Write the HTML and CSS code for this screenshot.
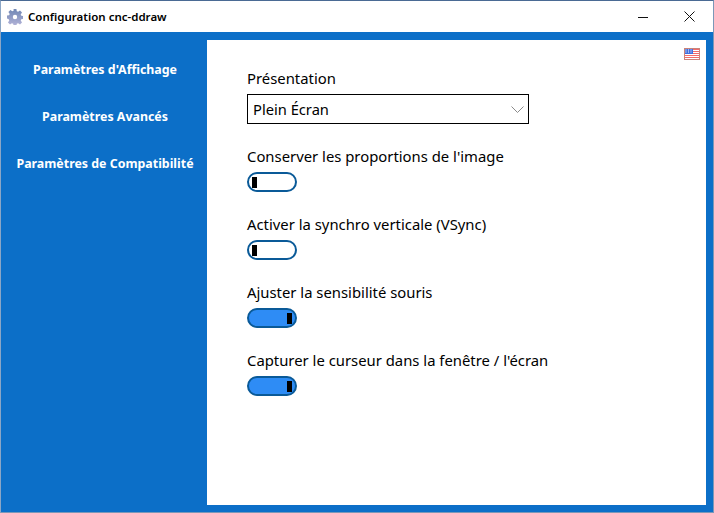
FILE: index.html
```html
<!DOCTYPE html>
<html lang="fr">
<head>
    <meta charset="UTF-8">
    <meta name="viewport" content="width=device-width, initial-scale=1.0">
    <title>Configuration cnc-ddraw</title>
    <link rel="stylesheet" href="styles.css">
</head>
<body>
    <div class="window">
        <div class="titlebar">
            <svg class="app-icon" width="16" height="16" viewBox="0 0 16 16">
                <defs>
                    <linearGradient id="gearFill" x1="0" y1="0" x2="0" y2="1">
                        <stop offset="0" stop-color="#6f86b4"/>
                        <stop offset="1" stop-color="#b4b4d8"/>
                    </linearGradient>
                </defs>
                <path fill="url(#gearFill)" fill-rule="evenodd" d="M6.600 0h2.800l.4 2.200 1.300.6 1.900-1.300 2 2-1.300 1.900.6 1.300 2.200.4v2.800l-2.200.4-.6 1.300 1.300 1.900-2 2-1.900-1.300-1.300.6-.4 2.200H6.600l-.4-2.200-1.300-.6-1.900 1.300-2-2 1.300-1.900-.6-1.300L0 9.400V6.600l2.100-.4.6-1.300L1.400 3l2-2 1.900 1.300 1.300-.6zM8 5.800a2.200 2.200 0 1 0 0 4.400 2.200 2.200 0 0 0 0-4.400z"/>
            </svg>
            <span class="window-title">Configuration cnc-ddraw</span>
            <div class="window-buttons">
                <svg width="10" height="10" viewBox="0 0 10 10"><path d="M0 5.500h10" stroke="#111" fill="none"/></svg>
                <svg width="11" height="11" viewBox="0 0 11 11"><path d="M.5.500l10 10M10.500.500l-10 10" stroke="#111" fill="none"/></svg>
            </div>
        </div>
        <div class="main">
            <nav class="sidebar">
                <a class="nav-item">Paramètres d'Affichage</a>
                <a class="nav-item">Paramètres Avancés</a>
                <a class="nav-item">Paramètres de Compatibilité</a>
            </nav>
            <div class="content">
                <svg class="flag" width="16" height="12" viewBox="0 0 16 12">
                    <rect width="16" height="12" fill="#fff"/>
                    <path d="M0 1.500h16M0 3.500h16M0 5.500h16M0 7.500h16M0 9.500h16" stroke="#f26a6a" fill="none"/>
                    <rect x="0" y="0" width="9" height="6" fill="#3f6fe0"/>
                    <path d="M1.500 2h1M4 2h1M6.500 2h1M1.500 4h1M4 4h1M6.500 4h1" stroke="#fff" fill="none"/>
                    <rect x=".5" y=".5" width="15" height="11" fill="none" stroke="#c9837a"/>
                </svg>
                <div class="setting">
                    <label class="setting-label">Présentation</label>
                    <div class="select">
                        <span>Plein Écran</span>
                        <svg width="13" height="7" viewBox="0 0 13 7"><path d="M.5.500l6 6 6-6" stroke="#8a8a8a" fill="none"/></svg>
                    </div>
                </div>
                <div class="setting">
                    <label class="setting-label">Conserver les proportions de l'image</label>
                    <div class="toggle"><span class="nub"></span></div>
                </div>
                <div class="setting">
                    <label class="setting-label">Activer la synchro verticale (VSync)</label>
                    <div class="toggle"><span class="nub"></span></div>
                </div>
                <div class="setting">
                    <label class="setting-label">Ajuster la sensibilité souris</label>
                    <div class="toggle on"><span class="nub"></span></div>
                </div>
                <div class="setting">
                    <label class="setting-label">Capturer le curseur dans la fenêtre / l'écran</label>
                    <div class="toggle on"><span class="nub"></span></div>
                </div>
            </div>
        </div>
    </div>
</body>
</html>
```

FILE: styles.css
```css
* {
    margin: 0;
    padding: 0;
    box-sizing: border-box;
}

body {
    font-family: "Noto Sans", Arial, sans-serif;
    background-color: #fff;
    width: 714px;
    height: 513px;
    overflow: hidden;
}

.window {
    width: 714px;
    height: 513px;
    display: flex;
    flex-direction: column;
    border: 1px solid #7b98b8;
    border-top-color: #4a6a94;
    border-left-color: #8ba6c6;
    background-color: #0c6fc8;
}

.titlebar {
    height: 31px;
    flex: none;
    display: flex;
    align-items: center;
    background-color: #fff;
    padding-left: 6px;
}

.app-icon {
    margin-right: 5px;
}

.window-title {
    font-size: 11.5px;
    font-weight: 600;
    color: #000;
}

.window-buttons {
    margin-left: auto;
    display: flex;
    align-items: center;
    gap: 36px;
    padding-right: 18px;
}

.window-buttons svg {
    display: block;
}

.main {
    flex: 1;
    display: flex;
    padding: 8px 7px 7px 0;
}

.sidebar {
    width: 206px;
    flex: none;
    display: flex;
    flex-direction: column;
    gap: 28px;
    padding: 20px 0 0 2px;
    text-align: center;
}

.nav-item {
    color: #fff;
    font-size: 12.4px;
    font-weight: 700;
    line-height: 19px;
}

.content {
    flex: 1;
    position: relative;
    background-color: #fff;
    padding: 29px 40px 0;
    display: flex;
    flex-direction: column;
    gap: 23px;
}

.flag {
    position: absolute;
    top: 8px;
    right: 6px;
}

.setting-label {
    display: block;
    font-size: 14.85px;
    line-height: 18px;
    color: #000;
    margin-bottom: 7px;
}

.select {
    width: 282px;
    height: 30px;
    border: 1px solid #000;
    display: flex;
    align-items: center;
    justify-content: space-between;
    padding: 0 4px 0 5px;
    font-size: 14.7px;
    color: #000;
}

.toggle {
    width: 50px;
    height: 20px;
    border: 2px solid #0a5a98;
    border-radius: 10px;
    background-color: #fff;
    display: flex;
    align-items: center;
    padding: 0 3px;
}

.toggle.on {
    background-color: #2e8cf5;
    justify-content: flex-end;
}

.nub {
    width: 5px;
    height: 11px;
    background-color: #000;
}
```
